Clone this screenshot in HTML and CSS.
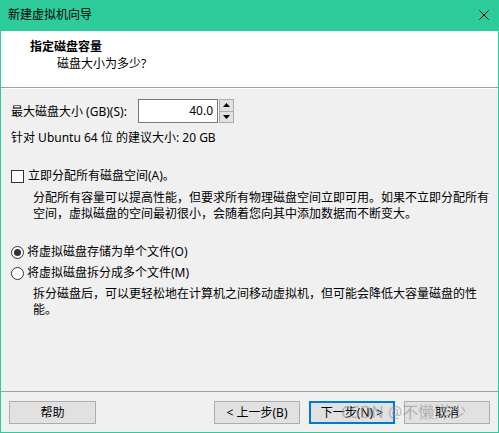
FILE: index.html
```html
<!DOCTYPE html>
<html lang="zh-CN">
<head>
<meta charset="utf-8">
<title>新建虚拟机向导</title>
<link rel="stylesheet" href="styles.css">
</head>
<body>
<div class="window">
  <div class="titlebar">
    <span class="title">新建虚拟机向导</span>
    <svg class="close" width="10" height="10" viewBox="0 0 10 10"><path d="M0.5 0.5 L9.5 9.5 M9.5 0.5 L0.5 9.5" stroke="#000" stroke-width="1" fill="none"/></svg>
  </div>
  <div class="header">
    <div class="h-title">指定磁盘容量</div>
    <div class="h-sub">磁盘大小为多少?</div>
  </div>
  <div class="content">
    <div class="size-row">
      <span class="label">最大磁盘大小 (GB)(S):</span>
      <div class="spin">
        <div class="spin-input">40.0</div>
        <div class="spin-btns">
          <div class="spin-btn"><svg width="7" height="4" viewBox="0 0 7 4"><path d="M3.5 0 L7 4 L0 4 Z" fill="#000"/></svg></div>
          <div class="spin-btn"><svg width="7" height="4" viewBox="0 0 7 4"><path d="M0 0 L7 0 L3.5 4 Z" fill="#000"/></svg></div>
        </div>
      </div>
    </div>
    <div class="recommend">针对 Ubuntu 64 位 的建议大小: 20 GB</div>
    <div class="check-row">
      <span class="checkbox"></span>
      <span>立即分配所有磁盘空间(A)。</span>
    </div>
    <div class="desc desc-a">分配所有容量可以提高性能，但要求所有物理磁盘空间立即可用。如果不立即分配所有<br>空间，虚拟磁盘的空间最初很小，会随着您向其中添加数据而不断变大。</div>
    <div class="radio-row radio-first">
      <span class="radio checked"></span>
      <span>将虚拟磁盘存储为单个文件(O)</span>
    </div>
    <div class="radio-row radio-second">
      <span class="radio"></span>
      <span>将虚拟磁盘拆分成多个文件(M)</span>
    </div>
    <div class="desc desc-b">拆分磁盘后，可以更轻松地在计算机之间移动虚拟机，但可能会降低大容量磁盘的性<br>能。</div>
  </div>
  <div class="footer">
    <button class="btn">帮助</button>
    <div class="btn-group">
      <button class="btn">&lt; 上一步(B)</button>
      <button class="btn btn-default">下一步(N) &gt;</button>
      <button class="btn">取消</button>
    </div>
  </div>
  <div class="watermark">CSDN @不懒洋少</div>
</div>
</body>
</html>
```

FILE: styles.css
```css
html, body {
  margin: 0;
  padding: 0;
}
body {
  font-family: "Noto Sans", "Noto Sans CJK SC", sans-serif;
  font-size: 12px;
  color: #000;
  background: #f0f0f0;
}
.window {
  position: relative;
  width: 499px;
  height: 433px;
  box-sizing: border-box;
  border: 1px solid #2ecc9b;
  border-top: none;
  background: #f0f0f0;
  display: flex;
  flex-direction: column;
}
.titlebar {
  height: 31px;
  margin: 0 -1px;
  background: #2ecc9b;
  display: flex;
  align-items: center;
  justify-content: space-between;
  padding: 0 10px 2px 8px;
  box-sizing: border-box;
}
.title {
  font-size: 12px;
  line-height: 16px;
}
.close {
  display: block;
}
.header {
  height: 56px;
  background: #fff;
  border-bottom: 1px solid #a0a0a0;
  box-shadow: 0 1px 0 #fff;
  box-sizing: content-box;
  padding-left: 29px;
}
.h-title {
  font-weight: bold;
  font-size: 12px;
  line-height: 16px;
  margin-top: 8px;
}
.h-sub {
  line-height: 16px;
  margin-top: 1px;
  padding-left: 27px;
}
.content {
  flex: 1;
  padding-left: 10px;
  padding-top: 11px;
}
.size-row {
  display: flex;
  align-items: center;
  height: 24px;
}
.label {
  width: 127px;
}
.spin {
  display: flex;
  height: 24px;
}
.spin-input {
  width: 80px;
  height: 24px;
  box-sizing: border-box;
  border: 1px solid #7a7a7a;
  background: #fff;
  text-align: right;
  padding-right: 4px;
  line-height: 21px;
}
.spin-btns {
  display: flex;
  flex-direction: column;
  width: 15px;
  height: 24px;
  margin-left: 1px;
}
.spin-btn {
  flex: 1;
  border: 1px solid #adadad;
  background: #e1e1e1;
  display: flex;
  align-items: center;
  justify-content: center;
}
.spin-btn + .spin-btn {
  border-top: none;
}
.spin-btn svg {
  display: block;
}
.recommend {
  margin-top: 7px;
  line-height: 16px;
}
.check-row {
  margin-top: 22px;
  display: flex;
  align-items: center;
  line-height: 16px;
}
.checkbox {
  width: 13px;
  height: 13px;
  box-sizing: border-box;
  border: 1px solid #333;
  background: #fff;
  margin-right: 4px;
}
.desc {
  padding-left: 22px;
  line-height: 16px;
}
.desc-a {
  margin-top: 6px;
}
.radio-row {
  display: flex;
  align-items: center;
  line-height: 16px;
}
.radio-first {
  margin-top: 22px;
}
.radio-second {
  margin-top: 5px;
}
.radio {
  width: 13px;
  height: 13px;
  box-sizing: border-box;
  border: 1px solid #333;
  border-radius: 50%;
  background: #fff;
  margin-right: 3px;
  position: relative;
}
.radio.checked::after {
  content: "";
  position: absolute;
  left: 2px;
  top: 2px;
  width: 7px;
  height: 7px;
  border-radius: 50%;
  background: #333;
}
.desc-b {
  margin-top: 5px;
}
.footer {
  border-top: 1px solid #a0a0a0;
  padding: 9px 8px 8px 8px;
  display: flex;
  justify-content: space-between;
  align-items: center;
}
.btn-group {
  display: flex;
  gap: 9px;
}
.btn {
  width: 87px;
  height: 23px;
  box-sizing: border-box;
  border: 1px solid #adadad;
  background: #e1e1e1;
  font-family: "Noto Sans", "Noto Sans CJK SC", sans-serif;
  font-size: 12px;
  color: #000;
  padding: 0;
  line-height: 19px;
}
.btn-group .btn {
  width: 86px;
}
.btn-default {
  border: 2px solid #0078d7;
}
.watermark {
  position: absolute;
  left: 340px;
  top: 401px;
  font-family: "Noto Sans", "Noto Sans CJK SC", sans-serif;
  font-size: 16px;
  line-height: 22px;
  color: rgba(150, 150, 150, 0.65);
  white-space: nowrap;
  pointer-events: none;
}
```
